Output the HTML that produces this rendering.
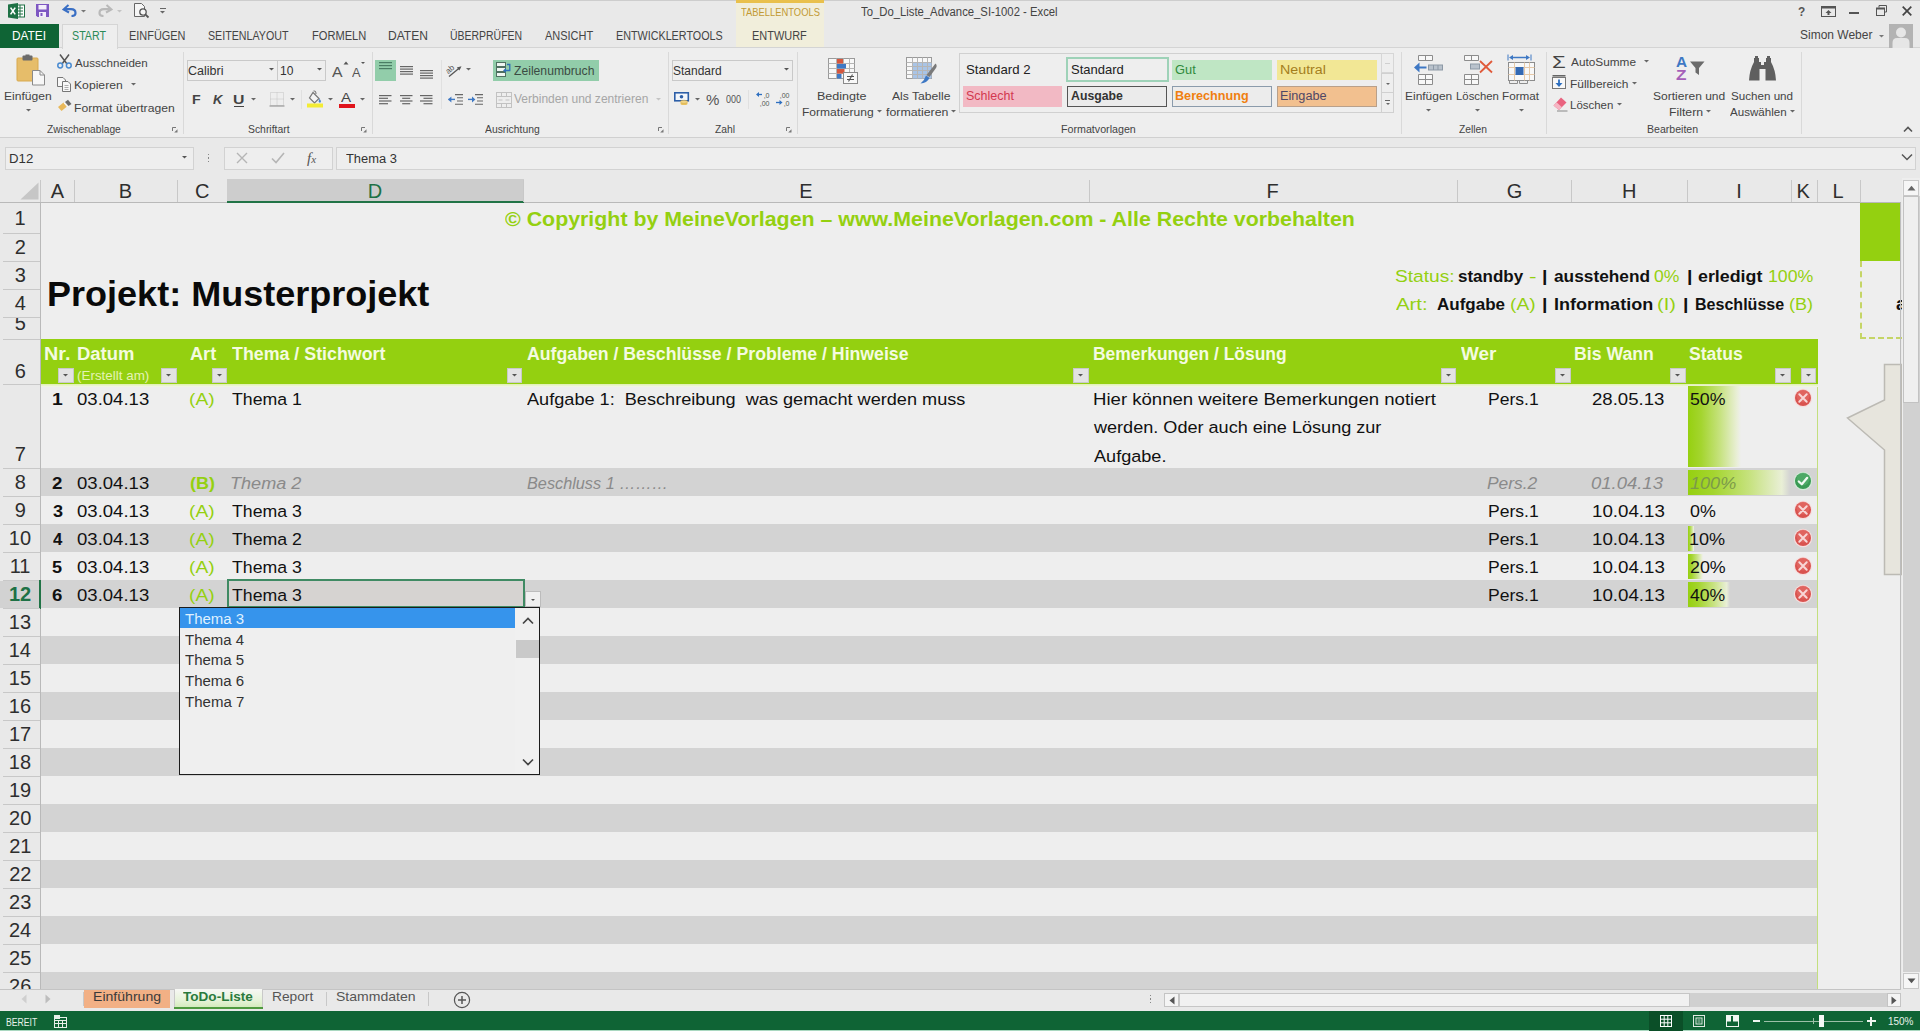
<!DOCTYPE html>
<html lang="de"><head><meta charset="utf-8"><title>To_Do_Liste_Advance_SI-1002 - Excel</title>
<style>
html,body{margin:0;padding:0;}
body{width:1920px;height:1031px;overflow:hidden;background:#e9e9e9;position:relative;font-family:"Liberation Sans",sans-serif;}
.t{position:absolute;white-space:pre;display:block;}
.r{position:absolute;box-sizing:border-box;display:block;}
</style></head><body>
<div class="r" style="left:0.00px;top:0.00px;width:1920.00px;height:1.00px;background:#cdcdcd;"></div>
<div class="r" style="left:736.00px;top:0.00px;width:88.00px;height:47.00px;background:#f1eedb;"></div>
<div class="r" style="left:736.00px;top:0.00px;width:88.00px;height:3.00px;background:#e9c04c;"></div>
<span class="t" style="top:4px;font-size:10.5px;line-height:16px;color:#c29a35;left:741.49px;transform:scaleX(0.8939);transform-origin:0 50%;">TABELLENTOOLS</span>
<span class="t" style="top:3px;font-size:12px;line-height:18px;color:#444;left:861.45px;transform:scaleX(0.9416);transform-origin:0 50%;">To_Do_Liste_Advance_SI-1002 - Excel</span>
<svg class="r" style="left:8.00px;top:3.00px" width="17" height="16" viewBox="0 0 17 16"><rect x="7" y="2" width="9.5" height="12" fill="#fff" stroke="#1e7145" stroke-width="1"/><path d="M9 5h6M9 8h6M9 11h6M12 2v12" stroke="#1e7145" stroke-width="1"/><path d="M0 1.5 L10 0 V16 L0 14.5Z" fill="#1e7145"/><path d="M2.6 4.6 L7.2 11.4 M7.2 4.6 L2.6 11.4" stroke="#fff" stroke-width="1.6"/></svg>
<svg class="r" style="left:36.00px;top:4.00px" width="13" height="13" viewBox="0 0 13 13"><path d="M0 0H13V13H1.5L0 11.5Z" fill="#7e57c2"/><rect x="2.5" y="1" width="8" height="4.5" fill="#f3eefa"/><rect x="3" y="8" width="7" height="5" fill="#f3eefa"/><rect x="4.5" y="9" width="2" height="3" fill="#7e57c2"/></svg>
<svg class="r" style="left:62.00px;top:4.00px" width="16" height="13" viewBox="0 0 16 13"><path d="M6.5 1 L1.5 5.5 L7 8.5" fill="none" stroke="#3a6fc4" stroke-width="2"/><path d="M2.5 5.2 H9 Q13.5 5.2 13.5 9 Q13.5 12 9.5 12" fill="none" stroke="#3a6fc4" stroke-width="2.2"/></svg>
<svg class="r" style="left:80.00px;top:8.75px" width="7.0" height="4.5" viewBox="0 0 7.0 4.5"><path d="M1 1 L6.0 1 L3.5 3.5 Z" fill="#777"/></svg>
<svg class="r" style="left:97.00px;top:4.00px" width="16" height="13" viewBox="0 0 16 13"><path d="M9.5 1 L14.5 5.5 L9 8.5" fill="none" stroke="#b9b9b9" stroke-width="2"/><path d="M13.5 5.2 H7 Q2.5 5.2 2.5 9 Q2.5 12 6.5 12" fill="none" stroke="#b9b9b9" stroke-width="2.2"/></svg>
<svg class="r" style="left:116.00px;top:8.75px" width="7.0" height="4.5" viewBox="0 0 7.0 4.5"><path d="M1 1 L6.0 1 L3.5 3.5 Z" fill="#c4c4c4"/></svg>
<svg class="r" style="left:133.00px;top:2.00px" width="17" height="17" viewBox="0 0 17 17"><path d="M1.5 1.5H8.5L11.5 4.5V14.5H1.5Z" fill="#f6f6f6" stroke="#666" stroke-width="1"/><circle cx="10" cy="10" r="3.2" fill="#f6f6f6" stroke="#555" stroke-width="1.3"/><path d="M12.3 12.3L15.5 15.5" stroke="#555" stroke-width="1.8"/></svg>
<div class="r" style="left:159.50px;top:8.00px;width:6.00px;height:1.00px;background:#666;"></div>
<svg class="r" style="left:159.00px;top:9.75px" width="7.0" height="4.5" viewBox="0 0 7.0 4.5"><path d="M1 1 L6.0 1 L3.5 3.5 Z" fill="#666"/></svg>
<span class="t" style="top:3px;font-size:12.5px;line-height:18px;color:#555;font-weight:700;left:1798.46px;transform:scaleX(0.9461);transform-origin:0 50%;">?</span>
<svg class="r" style="left:1821.00px;top:6.00px" width="15" height="11" viewBox="0 0 15 11"><rect x="0.5" y="0.5" width="14" height="10" fill="none" stroke="#555"/><rect x="0.5" y="0.5" width="14" height="2" fill="#555"/><path d="M7.5 4 L4.5 7 H6.5 V9 H8.5 V7 H10.5Z" fill="#555"/></svg>
<div class="r" style="left:1849.00px;top:12.00px;width:10.00px;height:2.00px;background:#555;"></div>
<svg class="r" style="left:1876.00px;top:5.00px" width="11" height="11" viewBox="0 0 11 11"><path d="M3 2.5V0.5H10.5V7H8.5" fill="none" stroke="#555"/><rect x="0.5" y="3" width="8" height="7.5" fill="none" stroke="#555"/><rect x="0.5" y="3" width="8" height="1.5" fill="#555"/></svg>
<svg class="r" style="left:1902.00px;top:6.00px" width="10" height="10" viewBox="0 0 10 10"><path d="M0.7 0.7L9.3 9.3M9.3 0.7L0.7 9.3" stroke="#444" stroke-width="1.7"/></svg>
<div class="r" style="left:0.00px;top:47.50px;width:1920.00px;height:90.00px;background:#eeeeee;"></div>
<div class="r" style="left:0.00px;top:47.00px;width:1920.00px;height:1.00px;background:#d4d4d4;"></div>
<div class="r" style="left:0.00px;top:24.00px;width:59.00px;height:24.00px;background:#0f6435;"></div>
<span class="t" style="top:27px;font-size:12px;line-height:18px;color:#fff;left:12.33px;transform:scaleX(0.9890);transform-origin:0 50%;">DATEI</span>
<div class="r" style="left:62.00px;top:24.00px;width:56.00px;height:24.50px;background:#eeeeee;border:1px solid #d5d5d5;border-bottom:none;"></div>
<span class="t" style="top:27px;font-size:12px;line-height:18px;color:#2b8a57;left:72.01px;transform:scaleX(0.8902);transform-origin:0 50%;">START</span>
<span class="t" style="top:27px;font-size:12px;line-height:18px;color:#444444;left:129.10px;transform:scaleX(0.9110);transform-origin:0 50%;">EINFÜGEN</span>
<span class="t" style="top:27px;font-size:12px;line-height:18px;color:#444444;left:207.82px;transform:scaleX(0.8891);transform-origin:0 50%;">SEITENLAYOUT</span>
<span class="t" style="top:27px;font-size:12px;line-height:18px;color:#444444;left:311.59px;transform:scaleX(0.9258);transform-origin:0 50%;">FORMELN</span>
<span class="t" style="top:27px;font-size:12px;line-height:18px;color:#444444;left:387.51px;transform:scaleX(1.0048);transform-origin:0 50%;">DATEN</span>
<span class="t" style="top:27px;font-size:12px;line-height:18px;color:#444444;left:449.59px;transform:scaleX(0.8716);transform-origin:0 50%;">ÜBERPRÜFEN</span>
<span class="t" style="top:27px;font-size:12px;line-height:18px;color:#444444;left:544.78px;transform:scaleX(0.9146);transform-origin:0 50%;">ANSICHT</span>
<span class="t" style="top:27px;font-size:12px;line-height:18px;color:#444444;left:615.82px;transform:scaleX(0.8971);transform-origin:0 50%;">ENTWICKLERTOOLS</span>
<span class="t" style="top:27px;font-size:12px;line-height:18px;color:#444444;left:752.40px;transform:scaleX(0.9124);transform-origin:0 50%;">ENTWURF</span>
<span class="t" style="top:26px;font-size:12px;line-height:18px;color:#444444;left:1800.26px;transform:scaleX(0.9995);transform-origin:0 50%;">Simon Weber</span>
<svg class="r" style="left:1877.50px;top:33.75px" width="7.0" height="4.5" viewBox="0 0 7.0 4.5"><path d="M1 1 L6.0 1 L3.5 3.5 Z" fill="#777"/></svg>
<svg class="r" style="left:1889.00px;top:24.00px" width="24" height="24" viewBox="0 0 24 24"><rect width="24" height="24" fill="#b3b3b3"/><circle cx="12" cy="8.5" r="5" fill="#e6e6e6"/><path d="M3.5 24 V19 Q3.5 14 8 14 H16 Q20.5 14 20.5 19 V24Z" fill="#e6e6e6"/></svg>
<div class="r" style="left:0.00px;top:137.00px;width:1920.00px;height:1.00px;background:#d0d0d0;"></div>
<div class="r" style="left:183.00px;top:52.00px;width:1.00px;height:82.00px;background:#d9d9d9;"></div>
<div class="r" style="left:371.50px;top:52.00px;width:1.00px;height:82.00px;background:#d9d9d9;"></div>
<div class="r" style="left:668.00px;top:52.00px;width:1.00px;height:82.00px;background:#d9d9d9;"></div>
<div class="r" style="left:796.50px;top:52.00px;width:1.00px;height:82.00px;background:#d9d9d9;"></div>
<div class="r" style="left:1400.50px;top:52.00px;width:1.00px;height:82.00px;background:#d9d9d9;"></div>
<div class="r" style="left:1545.50px;top:52.00px;width:1.00px;height:82.00px;background:#d9d9d9;"></div>
<div class="r" style="left:1801.00px;top:52.00px;width:1.00px;height:82.00px;background:#d9d9d9;"></div>
<span class="t" style="top:121px;font-size:11.5px;line-height:16px;color:#444;left:46.68px;transform:scaleX(0.8877);transform-origin:0 50%;">Zwischenablage</span>
<span class="t" style="top:121px;font-size:11.5px;line-height:16px;color:#444;left:248.23px;transform:scaleX(0.9030);transform-origin:0 50%;">Schriftart</span>
<span class="t" style="top:121px;font-size:11.5px;line-height:16px;color:#444;left:484.68px;transform:scaleX(0.9005);transform-origin:0 50%;">Ausrichtung</span>
<span class="t" style="top:121px;font-size:11.5px;line-height:16px;color:#444;left:714.67px;transform:scaleX(0.8946);transform-origin:0 50%;">Zahl</span>
<span class="t" style="top:121px;font-size:11.5px;line-height:16px;color:#444;left:1060.72px;transform:scaleX(0.9284);transform-origin:0 50%;">Formatvorlagen</span>
<span class="t" style="top:121px;font-size:11.5px;line-height:16px;color:#444;left:1458.67px;transform:scaleX(0.8937);transform-origin:0 50%;">Zellen</span>
<span class="t" style="top:121px;font-size:11.5px;line-height:16px;color:#444;left:1647.13px;transform:scaleX(0.9177);transform-origin:0 50%;">Bearbeiten</span>
<svg class="r" style="left:172.00px;top:127.00px" width="6" height="6" viewBox="0 0 6 6"><path d="M0.5 4V0.5H4" fill="none" stroke="#777"/><path d="M5.5 2.2V5.5H2.2Z" fill="#777"/></svg>
<svg class="r" style="left:361.00px;top:127.00px" width="6" height="6" viewBox="0 0 6 6"><path d="M0.5 4V0.5H4" fill="none" stroke="#777"/><path d="M5.5 2.2V5.5H2.2Z" fill="#777"/></svg>
<svg class="r" style="left:657.50px;top:127.00px" width="6" height="6" viewBox="0 0 6 6"><path d="M0.5 4V0.5H4" fill="none" stroke="#777"/><path d="M5.5 2.2V5.5H2.2Z" fill="#777"/></svg>
<svg class="r" style="left:786.00px;top:127.00px" width="6" height="6" viewBox="0 0 6 6"><path d="M0.5 4V0.5H4" fill="none" stroke="#777"/><path d="M5.5 2.2V5.5H2.2Z" fill="#777"/></svg>
<svg class="r" style="left:16.00px;top:54.00px" width="30" height="32" viewBox="0 0 30 32"><rect x="1" y="4" width="21" height="23" rx="1" fill="#e6bd6a"/><rect x="1" y="4" width="21" height="23" rx="1" fill="none" stroke="#d8a94e" stroke-width="1"/><rect x="6.5" y="1.5" width="10" height="5" rx="1" fill="#6b6b6b"/><rect x="9.5" y="0.5" width="4" height="2.5" fill="#6b6b6b"/><path d="M16.5 16.5H24L28.5 21V31H16.5Z" fill="#f7f7f7" stroke="#8a8a8a" stroke-width="1"/><path d="M24 16.5V21H28.5" fill="none" stroke="#8a8a8a" stroke-width="1"/></svg>
<span class="t" style="top:87px;font-size:11.7px;line-height:17px;color:#444444;left:4.01px;transform:scaleX(1.0344);transform-origin:0 50%;">Einfügen</span>
<svg class="r" style="left:24.50px;top:108.25px" width="7.0" height="4.5" viewBox="0 0 7.0 4.5"><path d="M1 1 L6.0 1 L3.5 3.5 Z" fill="#666"/></svg>
<svg class="r" style="left:57.00px;top:54.00px" width="15" height="15" viewBox="0 0 15 15"><path d="M3 0.5L10 10M12 0.5L5 10" stroke="#555" stroke-width="1.5" fill="none"/><circle cx="3.2" cy="11.5" r="2.4" fill="none" stroke="#4a8bd0" stroke-width="1.5"/><circle cx="11.8" cy="11.5" r="2.4" fill="none" stroke="#4a8bd0" stroke-width="1.5"/></svg>
<span class="t" style="top:54px;font-size:11.7px;line-height:17px;color:#444444;left:74.98px;transform:scaleX(0.9901);transform-origin:0 50%;">Ausschneiden</span>
<svg class="r" style="left:57.00px;top:77.00px" width="15" height="15" viewBox="0 0 15 15"><path d="M0.5 0.5H6L8.5 3V9.5H0.5Z" fill="#f7f7f7" stroke="#777"/><path d="M5.5 4.5H11L13.5 7V14.5H5.5Z" fill="#f7f7f7" stroke="#777"/><path d="M7.5 8.5H11.5M7.5 10.5H11.5M7.5 12.5H11.5" stroke="#999" stroke-width="0.8"/></svg>
<span class="t" style="top:76px;font-size:11.7px;line-height:17px;color:#444444;left:74.00px;transform:scaleX(1.0417);transform-origin:0 50%;">Kopieren</span>
<svg class="r" style="left:129.50px;top:82.25px" width="7.0" height="4.5" viewBox="0 0 7.0 4.5"><path d="M1 1 L6.0 1 L3.5 3.5 Z" fill="#666"/></svg>
<svg class="r" style="left:57.00px;top:99.00px" width="16" height="15" viewBox="0 0 16 15"><path d="M1 8L6.5 3.5L10 7.5L4.5 12Z" fill="#e8b85a"/><path d="M8 3L11 0.8L14.5 5L11.5 7Z" fill="#6b6b6b"/><path d="M7 4L10.5 8" stroke="#fff" stroke-width="0.8"/></svg>
<span class="t" style="top:99px;font-size:11.7px;line-height:17px;color:#444444;left:74.00px;transform:scaleX(1.0401);transform-origin:0 50%;">Format übertragen</span>
<div class="r" style="left:186.50px;top:59.50px;width:91.50px;height:21.50px;background:#eeeeee;border:1px solid #c9c9c9;"></div>
<div class="r" style="left:277.00px;top:59.50px;width:49.00px;height:21.50px;background:#eeeeee;border:1px solid #c9c9c9;"></div>
<span class="t" style="top:62px;font-size:12.5px;line-height:18px;color:#333;left:188.36px;transform:scaleX(1.0015);transform-origin:0 50%;">Calibri</span>
<span class="t" style="top:62px;font-size:12.5px;line-height:18px;color:#333;left:280.08px;transform:scaleX(0.9628);transform-origin:0 50%;">10</span>
<svg class="r" style="left:267.50px;top:67.25px" width="7.0" height="4.5" viewBox="0 0 7.0 4.5"><path d="M1 1 L6.0 1 L3.5 3.5 Z" fill="#555"/></svg>
<svg class="r" style="left:315.50px;top:67.25px" width="7.0" height="4.5" viewBox="0 0 7.0 4.5"><path d="M1 1 L6.0 1 L3.5 3.5 Z" fill="#555"/></svg>
<span class="t" style="top:61px;font-size:15px;line-height:21px;color:#555;left:332.47px;transform:scaleX(1.0556);transform-origin:0 50%;">A</span>
<svg class="r" style="left:343.00px;top:60.50px" width="6" height="4" viewBox="0 0 6 4"><path d="M0.5 3.5L3 0.5L5.5 3.5Z" fill="#555"/></svg>
<span class="t" style="top:63px;font-size:13px;line-height:19px;color:#555;left:352.47px;transform:scaleX(0.9860);transform-origin:0 50%;">A</span>
<svg class="r" style="left:360.00px;top:61.00px" width="6" height="4" viewBox="0 0 6 4"><path d="M1 1 L5 1 L3 3 Z" fill="#555"/></svg>
<span class="t" style="top:90px;font-size:13.5px;line-height:19px;color:#444;font-weight:700;left:192.35px;transform:scaleX(1.0512);transform-origin:0 50%;">F</span>
<span class="t" style="top:90px;font-size:13.5px;line-height:19px;color:#444;font-weight:700;font-style:italic;left:212.77px;transform:scaleX(0.9681);transform-origin:0 50%;">K</span>
<span class="t" style="top:90px;font-size:13.5px;line-height:19px;color:#444;font-weight:700;left:233.05px;transform:scaleX(1.1707);transform-origin:0 50%;">U</span>
<div class="r" style="left:233.50px;top:105.50px;width:10.50px;height:1.00px;background:#444;"></div>
<svg class="r" style="left:250.00px;top:96.75px" width="7.0" height="4.5" viewBox="0 0 7.0 4.5"><path d="M1 1 L6.0 1 L3.5 3.5 Z" fill="#666"/></svg>
<svg class="r" style="left:269.00px;top:91.00px" width="16" height="16" viewBox="0 0 16 16"><rect x="1.5" y="1.5" width="13" height="13" fill="none" stroke="#c4c4c4" stroke-dasharray="1 1"/><path d="M8 1.5V14.5M1.5 8H14.5" stroke="#c4c4c4" stroke-dasharray="1 1"/><path d="M0.5 15H15.5" stroke="#999" stroke-width="1.2"/></svg>
<svg class="r" style="left:289.00px;top:96.75px" width="7.0" height="4.5" viewBox="0 0 7.0 4.5"><path d="M1 1 L6.0 1 L3.5 3.5 Z" fill="#666"/></svg>
<div class="r" style="left:301.00px;top:90.00px;width:1.00px;height:19.00px;background:#e0e0e0;"></div>
<svg class="r" style="left:306.00px;top:90.00px" width="18" height="18" viewBox="0 0 18 18"><path d="M7 2.5 L13 8.5 L8.5 13 L3.5 8 Z" fill="#f4f4f4" stroke="#777" stroke-width="1.2"/><path d="M7.5 1 Q10 0.5 10 4" fill="none" stroke="#777" stroke-width="1.1"/><path d="M13.5 8.5 Q15.8 11.5 14.4 12.6 Q13 13.2 12.6 11.6Z" fill="#4a8bd0"/><rect x="1" y="13.5" width="16" height="4" fill="#f3ec35"/></svg>
<svg class="r" style="left:327.00px;top:96.75px" width="7.0" height="4.5" viewBox="0 0 7.0 4.5"><path d="M1 1 L6.0 1 L3.5 3.5 Z" fill="#666"/></svg>
<span class="t" style="top:89px;font-size:12.5px;line-height:18px;color:#444;left:341.47px;transform:scaleX(1.2064);transform-origin:0 50%;">A</span>
<div class="r" style="left:339.00px;top:103.50px;width:15.50px;height:4.00px;background:#e0141c;"></div>
<svg class="r" style="left:358.50px;top:96.75px" width="7.0" height="4.5" viewBox="0 0 7.0 4.5"><path d="M1 1 L6.0 1 L3.5 3.5 Z" fill="#666"/></svg>
<div class="r" style="left:374.50px;top:59.50px;width:21.00px;height:21.50px;background:#92cdaa;"></div>
<svg class="r" style="left:378.50px;top:62.00px" width="16" height="10" viewBox="0 0 16 10"><rect x="0" y="0" width="13" height="1.2" fill="#4b7d64"/><rect x="0" y="3" width="13" height="1.2" fill="#4b7d64"/><rect x="0" y="6" width="13" height="1.2" fill="#4b7d64"/></svg>
<svg class="r" style="left:399.50px;top:65.50px" width="16" height="11.0" viewBox="0 0 16 11.0"><rect x="0" y="0.0" width="13" height="1.2" fill="#666"/><rect x="0" y="2.5" width="13" height="1.2" fill="#666"/><rect x="0" y="5.0" width="13" height="1.2" fill="#666"/><rect x="0" y="7.5" width="13" height="1.2" fill="#666"/></svg>
<svg class="r" style="left:419.50px;top:69.50px" width="16" height="11.0" viewBox="0 0 16 11.0"><rect x="0" y="0.0" width="13" height="1.2" fill="#666"/><rect x="0" y="2.5" width="13" height="1.2" fill="#666"/><rect x="0" y="5.0" width="13" height="1.2" fill="#666"/><rect x="0" y="7.5" width="13" height="1.2" fill="#666"/></svg>
<svg class="r" style="left:379.00px;top:95.00px" width="16" height="11.8" viewBox="0 0 16 11.8"><rect x="0" y="0.0" width="12.5" height="1.2" fill="#666"/><rect x="0" y="2.7" width="9" height="1.2" fill="#666"/><rect x="0" y="5.4" width="12.5" height="1.2" fill="#666"/><rect x="0" y="8.100000000000001" width="9" height="1.2" fill="#666"/></svg>
<svg class="r" style="left:400.00px;top:95.00px" width="16" height="11.8" viewBox="0 0 16 11.8"><rect x="0" y="0.0" width="12.5" height="1.2" fill="#666"/><rect x="2.2" y="2.7" width="8" height="1.2" fill="#666"/><rect x="0" y="5.4" width="12.5" height="1.2" fill="#666"/><rect x="2.2" y="8.100000000000001" width="8" height="1.2" fill="#666"/></svg>
<svg class="r" style="left:420.00px;top:95.00px" width="16" height="11.8" viewBox="0 0 16 11.8"><rect x="0" y="0.0" width="12.5" height="1.2" fill="#666"/><rect x="3.5" y="2.7" width="9" height="1.2" fill="#666"/><rect x="0" y="5.4" width="12.5" height="1.2" fill="#666"/><rect x="3.5" y="8.100000000000001" width="9" height="1.2" fill="#666"/></svg>
<div class="r" style="left:441.00px;top:60.00px;width:1.00px;height:49.00px;background:#e0e0e0;"></div>
<svg class="r" style="left:446.00px;top:61.00px" width="17" height="17" viewBox="0 0 17 17"><text x="1" y="10" font-family="Liberation Sans, sans-serif" font-size="8" fill="#555" transform="rotate(-40 6 10)">ab</text><path d="M3 15.5L14 6.5" stroke="#555" stroke-width="1.3"/><path d="M15.5 5.3L10.8 6.4L13.4 9.6Z" fill="#555"/></svg>
<svg class="r" style="left:465.00px;top:67.25px" width="7.0" height="4.5" viewBox="0 0 7.0 4.5"><path d="M1 1 L6.0 1 L3.5 3.5 Z" fill="#666"/></svg>
<svg class="r" style="left:447.50px;top:94.00px" width="16" height="11" viewBox="0 0 16 11"><path d="M7 0.6H15M9 3.8H15M9 7H15M7 10.2H15" stroke="#666" stroke-width="1.1"/><path d="M0.5 5.4H7" stroke="#3e78c4" stroke-width="1.4"/><path d="M0 5.4L3.4 2.4V8.4Z" fill="#3e78c4"/></svg>
<svg class="r" style="left:467.50px;top:94.00px" width="16" height="11" viewBox="0 0 16 11"><path d="M7 0.6H15M9 3.8H15M9 7H15M7 10.2H15" stroke="#666" stroke-width="1.1"/><path d="M0 5.4H6" stroke="#3e78c4" stroke-width="1.4"/><path d="M7.4 5.4L4 2.4V8.4Z" fill="#3e78c4"/></svg>
<div class="r" style="left:493.30px;top:59.50px;width:105.50px;height:21.50px;background:#92cdaa;"></div>
<svg class="r" style="left:496.00px;top:62.00px" width="15" height="16" viewBox="0 0 15 16"><rect x="0.5" y="0.5" width="9" height="4" fill="#eef6f1" stroke="#4f6f60"/><rect x="0.5" y="5.5" width="9" height="4" fill="#eef6f1" stroke="#4f6f60"/><rect x="0.5" y="10.5" width="9" height="4" fill="#eef6f1" stroke="#4f6f60"/><path d="M11 2.5H13.8V8.5H8.5" fill="none" stroke="#2f6fb5" stroke-width="1.3"/><path d="M7 8.5L10 6V11Z" fill="#2f6fb5"/></svg>
<span class="t" style="top:62px;font-size:12px;line-height:18px;color:#3b4b43;left:513.61px;transform:scaleX(1.0139);transform-origin:0 50%;">Zeilenumbruch</span>
<svg class="r" style="left:496.00px;top:91.50px" width="16" height="16" viewBox="0 0 16 16"><rect x="0.5" y="0.5" width="15" height="15" fill="none" stroke="#c2c2c2"/><path d="M0.5 4.5H15.5M0.5 11.5H15.5M5.5 0.5V4.5M10.5 0.5V4.5M5.5 11.5V15.5M10.5 11.5V15.5" stroke="#c2c2c2"/><path d="M2.5 8H6.5M9.5 8H13.5" stroke="#c2c2c2" stroke-width="1.2"/></svg>
<span class="t" style="top:90px;font-size:12px;line-height:18px;color:#a6a6a6;left:513.95px;transform:scaleX(1.0017);transform-origin:0 50%;">Verbinden und zentrieren</span>
<svg class="r" style="left:655.00px;top:96.75px" width="7.0" height="4.5" viewBox="0 0 7.0 4.5"><path d="M1 1 L6.0 1 L3.5 3.5 Z" fill="#c4c4c4"/></svg>
<div class="r" style="left:671.50px;top:59.50px;width:121.50px;height:21.50px;background:#eeeeee;border:1px solid #c9c9c9;"></div>
<span class="t" style="top:62px;font-size:12.5px;line-height:18px;color:#333;left:673.46px;transform:scaleX(0.9582);transform-origin:0 50%;">Standard</span>
<svg class="r" style="left:783.00px;top:67.25px" width="7.0" height="4.5" viewBox="0 0 7.0 4.5"><path d="M1 1 L6.0 1 L3.5 3.5 Z" fill="#555"/></svg>
<svg class="r" style="left:674.00px;top:92.00px" width="16" height="15" viewBox="0 0 16 15"><rect x="0.8" y="0.8" width="13.5" height="8" fill="#f2f6fb" stroke="#2d5fa8" stroke-width="1.6"/><circle cx="7.5" cy="4.8" r="1.8" fill="#2d5fa8"/><ellipse cx="10" cy="11.5" rx="3.6" ry="1.6" fill="#e9c25e"/><ellipse cx="10" cy="9.8" rx="3.6" ry="1.6" fill="#f0d488" stroke="#d1a640" stroke-width="0.5"/></svg>
<svg class="r" style="left:694.00px;top:96.75px" width="7.0" height="4.5" viewBox="0 0 7.0 4.5"><path d="M1 1 L6.0 1 L3.5 3.5 Z" fill="#666"/></svg>
<span class="t" style="top:89px;font-size:15px;line-height:21px;color:#555;left:706.16px;transform:scaleX(1.0026);transform-origin:0 50%;">%</span>
<span class="t" style="top:92px;font-size:10px;line-height:15px;color:#555;left:726.35px;transform:scaleX(0.8992);transform-origin:0 50%;">000</span>
<div class="r" style="left:748.00px;top:90.00px;width:1.00px;height:19.00px;background:#e0e0e0;"></div>
<svg class="r" style="left:755.50px;top:91.00px" width="14" height="16" viewBox="0 0 14 16"><path d="M1 3.5H6" stroke="#2d6fc0" stroke-width="1.3"/><path d="M0 3.5L3 1V6Z" fill="#2d6fc0"/><text x="13.5" y="6.5" text-anchor="end" font-family="Liberation Sans, sans-serif" font-size="7" fill="#555">,0</text><text x="13.5" y="14.5" text-anchor="end" font-family="Liberation Sans, sans-serif" font-size="7" fill="#555">,00</text></svg>
<svg class="r" style="left:776.00px;top:91.00px" width="14" height="16" viewBox="0 0 14 16"><path d="M0 11.5H5" stroke="#2d6fc0" stroke-width="1.3"/><path d="M6.5 11.5L3.5 9V14Z" fill="#2d6fc0"/><text x="13.5" y="6.5" text-anchor="end" font-family="Liberation Sans, sans-serif" font-size="7" fill="#555">,00</text><text x="13.5" y="14.5" text-anchor="end" font-family="Liberation Sans, sans-serif" font-size="7" fill="#555">,0</text></svg>
<svg class="r" style="left:828.00px;top:57.00px" width="31" height="28" viewBox="0 0 31 28"><rect x="0.5" y="1.5" width="26" height="20" fill="#f8f8f8" stroke="#9a9a9a"/><path d="M0.5 6.5H26.5M0.5 11.5H26.5M0.5 16.5H26.5M8.5 1.5V21.5M15.5 1.5V21.5M21.5 1.5V21.5" stroke="#b5b5b5" stroke-width="1"/><rect x="9" y="2" width="6" height="4.5" fill="#d4573f"/><rect x="9" y="7" width="9" height="4.5" fill="#3e78c4"/><rect x="9" y="12" width="7.5" height="4.5" fill="#d4573f"/><rect x="9" y="17" width="4.5" height="4.5" fill="#3e78c4"/><rect x="15.5" y="15.5" width="14" height="11" fill="#f8f8f8" stroke="#8a8a8a"/><path d="M19 19.5H26M19 22.5H26M24.5 17.5L20.5 24.5" stroke="#555" stroke-width="1.1"/></svg>
<span class="t" style="top:87px;font-size:11.7px;line-height:17px;color:#444444;left:816.97px;transform:scaleX(1.0736);transform-origin:0 50%;">Bedingte</span>
<span class="t" style="top:103px;font-size:11.7px;line-height:17px;color:#444444;left:801.51px;transform:scaleX(1.0314);transform-origin:0 50%;">Formatierung</span>
<svg class="r" style="left:875.50px;top:108.75px" width="7.0" height="4.5" viewBox="0 0 7.0 4.5"><path d="M1 1 L6.0 1 L3.5 3.5 Z" fill="#666"/></svg>
<svg class="r" style="left:906.00px;top:56.00px" width="32" height="29" viewBox="0 0 32 29"><rect x="0.5" y="1.5" width="25" height="21" fill="#f8f8f8" stroke="#9a9a9a"/><rect x="7" y="7" width="18.5" height="15.5" fill="#a9c4e6"/><path d="M0.5 6.5H25.5M0.5 10.5H25.5M0.5 14.5H25.5M0.5 18.5H25.5M6.5 1.5V22.5M11.5 1.5V22.5M16.5 1.5V22.5M21.5 1.5V22.5" stroke="#b5b5b5" stroke-width="1"/><path d="M29.5 7.5Q31.5 9.5 30 12L23.5 21L20.5 19Z" fill="#7a7a7a"/><path d="M20 19.5L23.5 22Q21 27 14.5 27.5Q18.5 24.5 20 19.5Z" fill="#3e78c4"/></svg>
<span class="t" style="top:87px;font-size:11.7px;line-height:17px;color:#444444;left:891.98px;transform:scaleX(1.0389);transform-origin:0 50%;">Als Tabelle</span>
<span class="t" style="top:103px;font-size:11.7px;line-height:17px;color:#444444;left:885.83px;transform:scaleX(1.0558);transform-origin:0 50%;">formatieren</span>
<svg class="r" style="left:950.00px;top:108.75px" width="7.0" height="4.5" viewBox="0 0 7.0 4.5"><path d="M1 1 L6.0 1 L3.5 3.5 Z" fill="#666"/></svg>
<div class="r" style="left:959.00px;top:53.00px;width:435.00px;height:59.50px;background:#eeeeee;border:1px solid #d0d0d0;"></div>
<span class="t" style="top:60px;font-size:13.2px;line-height:19px;color:#222;left:966.10px;transform:scaleX(0.9997);transform-origin:0 50%;">Standard 2</span>
<div class="r" style="left:962.50px;top:85.50px;width:99.50px;height:21.00px;background:#f2b9c4;"></div>
<span class="t" style="top:87px;font-size:12.5px;line-height:18px;color:#d2384f;left:966.13px;transform:scaleX(1.0003);transform-origin:0 50%;">Schlecht</span>
<div class="r" style="left:1065.50px;top:57.00px;width:103.00px;height:24.50px;background:#eeeeee;border:2px solid #9ed2b8;"></div>
<span class="t" style="top:60px;font-size:13.2px;line-height:19px;color:#222;left:1071.01px;transform:scaleX(0.9861);transform-origin:0 50%;">Standard</span>
<div class="r" style="left:1067.00px;top:85.50px;width:100.00px;height:21.00px;background:#ebebeb;border:1px solid #555;"></div>
<span class="t" style="top:87px;font-size:12.5px;line-height:18px;color:#333;font-weight:700;left:1071.29px;transform:scaleX(0.9836);transform-origin:0 50%;">Ausgabe</span>
<div class="r" style="left:1172.00px;top:59.50px;width:100.00px;height:20.50px;background:#bfe6c4;"></div>
<span class="t" style="top:61px;font-size:12.5px;line-height:18px;color:#2f8a3c;left:1175.35px;transform:scaleX(1.0295);transform-origin:0 50%;">Gut</span>
<div class="r" style="left:1172.00px;top:85.50px;width:100.00px;height:21.00px;background:#ececec;border:1px solid #8b9bab;"></div>
<span class="t" style="top:87px;font-size:12.5px;line-height:18px;color:#f07f10;font-weight:700;left:1175.16px;transform:scaleX(1.0105);transform-origin:0 50%;">Berechnung</span>
<div class="r" style="left:1277.00px;top:59.50px;width:100.00px;height:20.50px;background:#f2e795;"></div>
<span class="t" style="top:61px;font-size:12.5px;line-height:18px;color:#a47e1d;left:1279.83px;transform:scaleX(1.1396);transform-origin:0 50%;">Neutral</span>
<div class="r" style="left:1277.00px;top:85.50px;width:100.00px;height:21.00px;background:#f2c08f;border:1px solid #b9a08a;"></div>
<span class="t" style="top:87px;font-size:12.5px;line-height:18px;color:#4f4766;left:1279.96px;transform:scaleX(1.0159);transform-origin:0 50%;">Eingabe</span>
<div class="r" style="left:1381.00px;top:53.00px;width:13.00px;height:20.00px;background:#eeeeee;border:1px solid #d6d6d6;"></div>
<div class="r" style="left:1381.00px;top:72.50px;width:13.00px;height:20.00px;background:#eeeeee;border:1px solid #d0d0d0;"></div>
<div class="r" style="left:1381.00px;top:92.00px;width:13.00px;height:20.50px;background:#eeeeee;border:1px solid #d0d0d0;"></div>
<div class="r" style="left:1385.00px;top:62.50px;width:5.00px;height:1.00px;background:#cfcfcf;"></div>
<svg class="r" style="left:1384.50px;top:81.50px" width="6" height="4" viewBox="0 0 6 4"><path d="M1 1 L5 1 L3 3 Z" fill="#666"/></svg>
<div class="r" style="left:1385.00px;top:99.50px;width:5.00px;height:1.00px;background:#666;"></div>
<svg class="r" style="left:1384.50px;top:101.50px" width="6" height="4" viewBox="0 0 6 4"><path d="M1 1 L5 1 L3 3 Z" fill="#666"/></svg>
<svg class="r" style="left:1414.00px;top:55.00px" width="30" height="30" viewBox="0 0 30 30"><path d="M4.5 0.5H18.5V5.5H4.5ZM11.5 0.5V5.5" fill="#f8f8f8" stroke="#8c8c8c"/><path d="M4.5 19.5H18.5V29.5H4.5ZM11.5 19.5V29.5M4.5 24.5H18.5" fill="#f8f8f8" stroke="#8c8c8c"/><rect x="14.5" y="10" width="14" height="5" fill="#b9c2cc" stroke="#8d99a6"/><path d="M19.5 10V15M24 10V15" stroke="#8d99a6"/><path d="M2 12.5H12.5" stroke="#3e78c4" stroke-width="2"/><path d="M0 12.5L5.5 7.5V17.5Z" fill="#3e78c4"/></svg>
<span class="t" style="top:87px;font-size:11.7px;line-height:17px;color:#444444;left:1404.82px;transform:scaleX(1.0231);transform-origin:0 50%;">Einfügen</span>
<svg class="r" style="left:1425.20px;top:108.25px" width="7.0" height="4.5" viewBox="0 0 7.0 4.5"><path d="M1 1 L6.0 1 L3.5 3.5 Z" fill="#666"/></svg>
<svg class="r" style="left:1464.00px;top:55.00px" width="30" height="30" viewBox="0 0 30 30"><path d="M0.5 0.5H14.5V5.5H0.5ZM7.5 0.5V5.5" fill="#f8f8f8" stroke="#8c8c8c"/><path d="M0.5 19.5H14.5V29.5H0.5ZM7.5 19.5V29.5M0.5 24.5H14.5" fill="#f8f8f8" stroke="#8c8c8c"/><rect x="6.5" y="9" width="9" height="5" fill="#b9c2cc" stroke="#8d99a6"/><path d="M16 6L28 17.5M28 6L16 17.5" stroke="#e05a3a" stroke-width="1.8"/></svg>
<span class="t" style="top:87px;font-size:11.7px;line-height:17px;color:#444444;left:1455.77px;transform:scaleX(0.9714);transform-origin:0 50%;">Löschen</span>
<svg class="r" style="left:1474.00px;top:108.25px" width="7.0" height="4.5" viewBox="0 0 7.0 4.5"><path d="M1 1 L6.0 1 L3.5 3.5 Z" fill="#666"/></svg>
<svg class="r" style="left:1507.00px;top:54.00px" width="29" height="31" viewBox="0 0 29 31"><path d="M4 3.5H21" stroke="#3e78c4" stroke-width="1.5"/><path d="M2 3.5L6 1V6ZM23 3.5L19 1V6Z" fill="#3e78c4"/><path d="M1 0.5V6.5M24 0.5V6.5" stroke="#3e78c4"/><rect x="1.5" y="8.5" width="26" height="18" fill="#f8f8f8" stroke="#8c8c8c"/><path d="M1.5 13.5H27.5M1.5 20.5H27.5M7.5 8.5V26.5M17.5 8.5V26.5M22.5 8.5V26.5" stroke="#e6c9a8"/><rect x="8.5" y="13" width="8" height="8" fill="#3469b3"/><path d="M2.5 27V29.5H10.5V27M12.5 27V29.5H20.5V27" fill="none" stroke="#8c8c8c"/></svg>
<span class="t" style="top:87px;font-size:11.7px;line-height:17px;color:#444444;left:1502.04px;transform:scaleX(0.9997);transform-origin:0 50%;">Format</span>
<svg class="r" style="left:1518.20px;top:108.25px" width="7.0" height="4.5" viewBox="0 0 7.0 4.5"><path d="M1 1 L6.0 1 L3.5 3.5 Z" fill="#666"/></svg>
<span class="t" style="top:52px;font-size:16px;line-height:21px;color:#444;left:1552.13px;transform:scaleX(1.3904);transform-origin:0 50%;">Σ</span>
<span class="t" style="top:53px;font-size:11.7px;line-height:17px;color:#444444;left:1570.78px;transform:scaleX(1.0104);transform-origin:0 50%;">AutoSumme</span>
<svg class="r" style="left:1642.50px;top:59.25px" width="7.0" height="4.5" viewBox="0 0 7.0 4.5"><path d="M1 1 L6.0 1 L3.5 3.5 Z" fill="#666"/></svg>
<svg class="r" style="left:1552.00px;top:75.00px" width="15" height="15" viewBox="0 0 15 15"><rect x="0.5" y="2.5" width="13" height="11" fill="#f8f8f8" stroke="#777"/><path d="M0.5 0.8H13.5" stroke="#555" stroke-width="1.4"/><path d="M7 4.5V9" stroke="#2d6fc0" stroke-width="1.8"/><path d="M7 12L3.5 8H10.5Z" fill="#2d6fc0"/></svg>
<span class="t" style="top:75px;font-size:11.7px;line-height:17px;color:#444444;left:1569.82px;transform:scaleX(1.0215);transform-origin:0 50%;">Füllbereich</span>
<svg class="r" style="left:1630.50px;top:81.25px" width="7.0" height="4.5" viewBox="0 0 7.0 4.5"><path d="M1 1 L6.0 1 L3.5 3.5 Z" fill="#666"/></svg>
<svg class="r" style="left:1552.00px;top:96.00px" width="17" height="16" viewBox="0 0 17 16"><path d="M1.5 9.5L9 1.5L14.5 6.5L7 14Z" fill="#e9637f"/><path d="M1.5 9.5L4.5 6.3L10 11.3L7 14Z" fill="#f5b5c3"/><path d="M5 15H15.5" stroke="#888" stroke-width="1"/></svg>
<span class="t" style="top:96px;font-size:11.7px;line-height:17px;color:#444444;left:1569.86px;transform:scaleX(0.9808);transform-origin:0 50%;">Löschen</span>
<svg class="r" style="left:1615.50px;top:102.25px" width="7.0" height="4.5" viewBox="0 0 7.0 4.5"><path d="M1 1 L6.0 1 L3.5 3.5 Z" fill="#666"/></svg>
<span class="t" style="top:52px;font-size:14.5px;line-height:20px;color:#3e78c4;font-weight:700;left:1676.32px;transform:scaleX(1.0588);transform-origin:0 50%;">A</span>
<span class="t" style="top:65px;font-size:14.5px;line-height:20px;color:#a55fb8;font-weight:700;left:1676.49px;transform:scaleX(1.1863);transform-origin:0 50%;">Z</span>
<svg class="r" style="left:1690.00px;top:61.00px" width="15" height="15" viewBox="0 0 15 15"><path d="M0 0.5H14.5L9 7V14L5.5 11.5V7Z" fill="#6b6b6b"/></svg>
<span class="t" style="top:87px;font-size:11.7px;line-height:17px;color:#444444;left:1653.45px;transform:scaleX(1.0295);transform-origin:0 50%;">Sortieren und</span>
<span class="t" style="top:103px;font-size:11.7px;line-height:17px;color:#444444;left:1668.69px;transform:scaleX(1.0491);transform-origin:0 50%;">Filtern</span>
<svg class="r" style="left:1705.00px;top:108.75px" width="7.0" height="4.5" viewBox="0 0 7.0 4.5"><path d="M1 1 L6.0 1 L3.5 3.5 Z" fill="#666"/></svg>
<svg class="r" style="left:1748.00px;top:56.00px" width="29" height="26" viewBox="0 0 29 26"><path d="M6 2H11V6H13V9H16V6H18V2H23V6Q27.5 14 28 24.5H17.5V13H11.5V24.5H1Q1.5 14 6 6Z" fill="#5f5f5f"/><rect x="7" y="0" width="3" height="3" fill="#5f5f5f"/><rect x="19" y="0" width="3" height="3" fill="#5f5f5f"/></svg>
<span class="t" style="top:87px;font-size:11.7px;line-height:17px;color:#444444;left:1731.17px;transform:scaleX(0.9940);transform-origin:0 50%;">Suchen und</span>
<span class="t" style="top:103px;font-size:11.7px;line-height:17px;color:#444444;left:1729.98px;transform:scaleX(0.9919);transform-origin:0 50%;">Auswählen</span>
<svg class="r" style="left:1789.00px;top:108.75px" width="7.0" height="4.5" viewBox="0 0 7.0 4.5"><path d="M1 1 L6.0 1 L3.5 3.5 Z" fill="#666"/></svg>
<svg class="r" style="left:1903.00px;top:126.00px" width="10" height="7" viewBox="0 0 10 7"><path d="M1 5.5L5 1.5L9 5.5" fill="none" stroke="#555" stroke-width="1.6"/></svg>
<div class="r" style="left:4.50px;top:146.50px;width:189.00px;height:23.00px;background:#eeeeee;border:1px solid #d2d2d2;"></div>
<span class="t" style="top:150px;font-size:12.5px;line-height:18px;color:#333;left:8.92px;transform:scaleX(1.0575);transform-origin:0 50%;">D12</span>
<svg class="r" style="left:180.50px;top:154.75px" width="7.0" height="4.5" viewBox="0 0 7.0 4.5"><path d="M1 1 L6.0 1 L3.5 3.5 Z" fill="#555"/></svg>
<div class="r" style="left:207.50px;top:153.50px;width:1.50px;height:1.50px;background:#888;"></div>
<div class="r" style="left:207.50px;top:157.00px;width:1.50px;height:1.50px;background:#888;"></div>
<div class="r" style="left:207.50px;top:160.50px;width:1.50px;height:1.50px;background:#888;"></div>
<div class="r" style="left:223.50px;top:146.50px;width:109.50px;height:23.00px;background:#eeeeee;border:1px solid #d2d2d2;"></div>
<svg class="r" style="left:236.00px;top:151.50px" width="12" height="12" viewBox="0 0 12 12"><path d="M1 1L11 11M11 1L1 11" stroke="#b5b5b5" stroke-width="1.4"/></svg>
<svg class="r" style="left:271.00px;top:151.50px" width="14" height="12" viewBox="0 0 14 12"><path d="M1 6.5L5 10.5L13 1" fill="none" stroke="#b5b5b5" stroke-width="1.6"/></svg>
<span class="t" style="left:307px;top:149px;font-family:'Liberation Serif',serif;font-style:italic;font-size:15px;line-height:18px;color:#555">f<span style="font-size:11px">x</span></span>
<div class="r" style="left:336.00px;top:146.50px;width:1580.00px;height:23.00px;background:#eeeeee;border:1px solid #d2d2d2;"></div>
<span class="t" style="top:150px;font-size:12.5px;line-height:18px;color:#333;left:345.71px;transform:scaleX(1.0309);transform-origin:0 50%;">Thema 3</span>
<svg class="r" style="left:1901.00px;top:153.00px" width="12" height="8" viewBox="0 0 12 8"><path d="M1 1.5L6 6.5L11 1.5" fill="none" stroke="#555" stroke-width="1.5"/></svg>
<div class="r" style="left:41.00px;top:202.50px;width:1860.00px;height:786.50px;background:#eeeeee;"></div>
<div class="r" style="left:0.00px;top:178.00px;width:1901.00px;height:24.50px;background:#e9e9e9;"></div>
<div class="r" style="left:0.00px;top:202.00px;width:1901.00px;height:1.00px;background:#b9b9b9;"></div>
<svg class="r" style="left:20.00px;top:182.00px" width="19" height="18" viewBox="0 0 19 18"><path d="M18.5 0.5V17.5H0.5Z" fill="#c6c6c6"/></svg>
<span class="t" style="top:178px;font-size:20px;line-height:26px;color:#2e2e2e;left:50.83px;">A</span>
<div class="r" style="left:73.50px;top:180.00px;width:1.00px;height:22.00px;background:#c8c8c8;"></div>
<span class="t" style="top:178px;font-size:20px;line-height:26px;color:#2e2e2e;left:118.79px;">B</span>
<div class="r" style="left:177.00px;top:180.00px;width:1.00px;height:22.00px;background:#c8c8c8;"></div>
<span class="t" style="top:178px;font-size:20px;line-height:26px;color:#2e2e2e;left:194.90px;">C</span>
<div class="r" style="left:226.50px;top:180.00px;width:1.00px;height:22.00px;background:#c8c8c8;"></div>
<div class="r" style="left:227.00px;top:178.50px;width:296.50px;height:23.50px;background:#cdcdcd;"></div>
<div class="r" style="left:227.00px;top:200.50px;width:296.50px;height:2.00px;background:#217346;"></div>
<span class="t" style="top:178px;font-size:20px;line-height:26px;color:#1e7145;left:367.69px;">D</span>
<div class="r" style="left:523.00px;top:180.00px;width:1.00px;height:22.00px;background:#c8c8c8;"></div>
<span class="t" style="top:178px;font-size:20px;line-height:26px;color:#2e2e2e;left:799.19px;">E</span>
<div class="r" style="left:1088.50px;top:180.00px;width:1.00px;height:22.00px;background:#c8c8c8;"></div>
<span class="t" style="top:178px;font-size:20px;line-height:26px;color:#2e2e2e;left:1266.47px;">F</span>
<div class="r" style="left:1456.50px;top:180.00px;width:1.00px;height:22.00px;background:#c8c8c8;"></div>
<span class="t" style="top:178px;font-size:20px;line-height:26px;color:#2e2e2e;left:1506.72px;">G</span>
<div class="r" style="left:1571.00px;top:180.00px;width:1.00px;height:22.00px;background:#c8c8c8;"></div>
<span class="t" style="top:178px;font-size:20px;line-height:26px;color:#2e2e2e;left:1622.02px;">H</span>
<div class="r" style="left:1686.50px;top:180.00px;width:1.00px;height:22.00px;background:#c8c8c8;"></div>
<span class="t" style="top:178px;font-size:20px;line-height:26px;color:#2e2e2e;left:1736.22px;">I</span>
<div class="r" style="left:1790.50px;top:180.00px;width:1.00px;height:22.00px;background:#c8c8c8;"></div>
<span class="t" style="top:178px;font-size:20px;line-height:26px;color:#2e2e2e;left:1796.62px;">K</span>
<div class="r" style="left:1816.50px;top:180.00px;width:1.00px;height:22.00px;background:#c8c8c8;"></div>
<span class="t" style="top:178px;font-size:20px;line-height:26px;color:#2e2e2e;left:1832.45px;">L</span>
<div class="r" style="left:1859.50px;top:180.00px;width:1.00px;height:22.00px;background:#c8c8c8;"></div>
<div class="r" style="left:40.00px;top:180.00px;width:1.00px;height:22.00px;background:#c8c8c8;"></div>
<div class="r" style="left:0.00px;top:203.00px;width:40.50px;height:786.00px;background:#e9e9e9;"></div>
<div class="r" style="left:40.20px;top:203.00px;width:1.00px;height:786.00px;background:#b9b9b9;"></div>
<span class="t" style="top:205px;font-size:20px;line-height:26px;color:#2e2e2e;left:14.46px;">1</span>
<div class="r" style="left:3.00px;top:233.00px;width:37.00px;height:1.00px;background:#c8c8c8;"></div>
<span class="t" style="top:234px;font-size:20px;line-height:26px;color:#2e2e2e;left:14.74px;">2</span>
<div class="r" style="left:3.00px;top:260.50px;width:37.00px;height:1.00px;background:#c8c8c8;"></div>
<span class="t" style="top:262px;font-size:20px;line-height:26px;color:#2e2e2e;left:14.80px;">3</span>
<div class="r" style="left:3.00px;top:288.50px;width:37.00px;height:1.00px;background:#c8c8c8;"></div>
<span class="t" style="top:290px;font-size:20px;line-height:26px;color:#2e2e2e;left:14.80px;">4</span>
<div class="r" style="left:3.00px;top:316.50px;width:37.00px;height:1.00px;background:#c8c8c8;"></div>
<span class="t" style="top:310px;font-size:20px;line-height:26px;color:#2e2e2e;left:14.76px;">5</span>
<div class="r" style="left:3.00px;top:338.50px;width:37.00px;height:1.00px;background:#c8c8c8;"></div>
<span class="t" style="top:358px;font-size:20px;line-height:26px;color:#2e2e2e;left:14.67px;">6</span>
<div class="r" style="left:3.00px;top:384.00px;width:37.00px;height:1.00px;background:#c8c8c8;"></div>
<span class="t" style="top:441px;font-size:20px;line-height:26px;color:#2e2e2e;left:14.73px;">7</span>
<div class="r" style="left:3.00px;top:467.50px;width:37.00px;height:1.00px;background:#c8c8c8;"></div>
<span class="t" style="top:469px;font-size:20px;line-height:26px;color:#2e2e2e;left:14.74px;">8</span>
<div class="r" style="left:3.00px;top:495.50px;width:37.00px;height:1.00px;background:#c8c8c8;"></div>
<span class="t" style="top:497px;font-size:20px;line-height:26px;color:#2e2e2e;left:14.74px;">9</span>
<div class="r" style="left:3.00px;top:523.50px;width:37.00px;height:1.00px;background:#c8c8c8;"></div>
<span class="t" style="top:525px;font-size:20px;line-height:26px;color:#2e2e2e;left:8.81px;">10</span>
<div class="r" style="left:3.00px;top:551.50px;width:37.00px;height:1.00px;background:#c8c8c8;"></div>
<span class="t" style="top:553px;font-size:20px;line-height:26px;color:#2e2e2e;left:9.65px;">11</span>
<div class="r" style="left:3.00px;top:579.50px;width:37.00px;height:1.00px;background:#c8c8c8;"></div>
<div class="r" style="left:0.00px;top:580.50px;width:39.00px;height:27.50px;background:#d2d2d2;"></div>
<div class="r" style="left:38.50px;top:580.00px;width:2.50px;height:28.50px;background:#217346;"></div>
<span class="t" style="top:581px;font-size:20px;line-height:26px;color:#1e7145;font-weight:700;left:8.95px;">12</span>
<div class="r" style="left:3.00px;top:607.50px;width:37.00px;height:1.00px;background:#c8c8c8;"></div>
<span class="t" style="top:609px;font-size:20px;line-height:26px;color:#2e2e2e;left:8.85px;">13</span>
<div class="r" style="left:3.00px;top:635.50px;width:37.00px;height:1.00px;background:#c8c8c8;"></div>
<span class="t" style="top:637px;font-size:20px;line-height:26px;color:#2e2e2e;left:8.71px;">14</span>
<div class="r" style="left:3.00px;top:663.50px;width:37.00px;height:1.00px;background:#c8c8c8;"></div>
<span class="t" style="top:665px;font-size:20px;line-height:26px;color:#2e2e2e;left:8.83px;">15</span>
<div class="r" style="left:3.00px;top:691.50px;width:37.00px;height:1.00px;background:#c8c8c8;"></div>
<span class="t" style="top:693px;font-size:20px;line-height:26px;color:#2e2e2e;left:8.85px;">16</span>
<div class="r" style="left:3.00px;top:719.50px;width:37.00px;height:1.00px;background:#c8c8c8;"></div>
<span class="t" style="top:721px;font-size:20px;line-height:26px;color:#2e2e2e;left:8.92px;">17</span>
<div class="r" style="left:3.00px;top:747.50px;width:37.00px;height:1.00px;background:#c8c8c8;"></div>
<span class="t" style="top:749px;font-size:20px;line-height:26px;color:#2e2e2e;left:8.85px;">18</span>
<div class="r" style="left:3.00px;top:775.50px;width:37.00px;height:1.00px;background:#c8c8c8;"></div>
<span class="t" style="top:777px;font-size:20px;line-height:26px;color:#2e2e2e;left:8.89px;">19</span>
<div class="r" style="left:3.00px;top:803.50px;width:37.00px;height:1.00px;background:#c8c8c8;"></div>
<span class="t" style="top:805px;font-size:20px;line-height:26px;color:#2e2e2e;left:9.06px;">20</span>
<div class="r" style="left:3.00px;top:831.50px;width:37.00px;height:1.00px;background:#c8c8c8;"></div>
<span class="t" style="top:833px;font-size:20px;line-height:26px;color:#2e2e2e;left:9.16px;">21</span>
<div class="r" style="left:3.00px;top:859.50px;width:37.00px;height:1.00px;background:#c8c8c8;"></div>
<span class="t" style="top:861px;font-size:20px;line-height:26px;color:#2e2e2e;left:9.18px;">22</span>
<div class="r" style="left:3.00px;top:887.50px;width:37.00px;height:1.00px;background:#c8c8c8;"></div>
<span class="t" style="top:889px;font-size:20px;line-height:26px;color:#2e2e2e;left:9.11px;">23</span>
<div class="r" style="left:3.00px;top:915.50px;width:37.00px;height:1.00px;background:#c8c8c8;"></div>
<span class="t" style="top:917px;font-size:20px;line-height:26px;color:#2e2e2e;left:8.97px;">24</span>
<div class="r" style="left:3.00px;top:943.50px;width:37.00px;height:1.00px;background:#c8c8c8;"></div>
<span class="t" style="top:945px;font-size:20px;line-height:26px;color:#2e2e2e;left:9.09px;">25</span>
<div class="r" style="left:3.00px;top:971.50px;width:37.00px;height:1.00px;background:#c8c8c8;"></div>
<span class="t" style="top:973px;font-size:20px;line-height:26px;color:#2e2e2e;left:9.11px;">26</span>
<div class="r" style="left:3.00px;top:999.50px;width:37.00px;height:1.00px;background:#c8c8c8;"></div>
<div class="r" style="left:3.00px;top:313.50px;width:36.00px;height:3.00px;background:#e9e9e9;"></div>
<div class="r" style="left:3.00px;top:316.50px;width:37.00px;height:1.00px;background:#c8c8c8;"></div>
<div class="r" style="left:41.00px;top:467.80px;width:1776.00px;height:27.90px;background:#d3d3d3;"></div>
<div class="r" style="left:41.00px;top:523.80px;width:1776.00px;height:27.90px;background:#d3d3d3;"></div>
<div class="r" style="left:41.00px;top:579.80px;width:1776.00px;height:27.90px;background:#d3d3d3;"></div>
<div class="r" style="left:41.00px;top:635.80px;width:1776.00px;height:27.90px;background:#d3d3d3;"></div>
<div class="r" style="left:41.00px;top:691.80px;width:1776.00px;height:27.90px;background:#d3d3d3;"></div>
<div class="r" style="left:41.00px;top:747.80px;width:1776.00px;height:27.90px;background:#d3d3d3;"></div>
<div class="r" style="left:41.00px;top:803.80px;width:1776.00px;height:27.90px;background:#d3d3d3;"></div>
<div class="r" style="left:41.00px;top:859.80px;width:1776.00px;height:27.90px;background:#d3d3d3;"></div>
<div class="r" style="left:41.00px;top:915.80px;width:1776.00px;height:27.90px;background:#d3d3d3;"></div>
<div class="r" style="left:41.00px;top:971.80px;width:1776.00px;height:16.90px;background:#d3d3d3;"></div>
<div class="r" style="left:1817.50px;top:203.00px;width:43.00px;height:786.00px;background:#eeeeee;"></div>
<div class="r" style="left:1860.00px;top:203.00px;width:41.00px;height:786.00px;background:#eeeeee;"></div>
<div class="r" style="left:1816.80px;top:384.00px;width:1.20px;height:605.00px;background:#c3df7e;"></div>
<div class="r" style="left:1860.00px;top:202.50px;width:40.50px;height:58.50px;background:#94d010;"></div>
<div class="r" style="left:1860.00px;top:261.00px;width:42.00px;height:78.00px;border:2px dashed #c5d566;border-top:none;border-right:none;"></div>
<span class="t" style="top:292px;font-size:18px;line-height:24px;color:#111;font-weight:700;left:1895.98px;transform:scaleX(0.9898);transform-origin:0 50%;">a</span>
<svg class="r" style="left:1844.00px;top:362.00px" width="58" height="215" viewBox="0 0 58 215"><path d="M40.5 2.5H57.5V212.5H40.5V88L3.5 56L40.5 38Z" fill="#e7e5dd" stroke="#bcbab4" stroke-width="1.5"/></svg>
<div class="r" style="left:1900.20px;top:203.00px;width:1.30px;height:786.00px;background:#bdbdbd;"></div>
<div class="r" style="left:1901.50px;top:178.00px;width:18.50px;height:811.00px;background:#eeeeee;"></div>
<div class="r" style="left:1903.00px;top:196.00px;width:17.00px;height:776.00px;background:#d1d1d1;"></div>
<div class="r" style="left:1903.00px;top:179.50px;width:15.50px;height:16.00px;background:#f6f6f6;border:1px solid #c8c8c8;"></div>
<svg class="r" style="left:1906.50px;top:184.50px" width="9" height="6" viewBox="0 0 9 6"><path d="M0.5 5.5L4.5 0.8L8.5 5.5Z" fill="#666"/></svg>
<div class="r" style="left:1903.00px;top:195.50px;width:15.50px;height:207.50px;background:#efefef;border:1px solid #c2c2c2;"></div>
<div class="r" style="left:1903.00px;top:972.50px;width:15.50px;height:16.00px;background:#f6f6f6;border:1px solid #c8c8c8;"></div>
<svg class="r" style="left:1906.50px;top:978.00px" width="9" height="6" viewBox="0 0 9 6"><path d="M0.5 0.5L4.5 5.2L8.5 0.5Z" fill="#555"/></svg>
<span class="t" style="top:206px;font-size:19.8px;line-height:26px;color:#94d010;font-weight:700;left:504.67px;transform:scaleX(1.0795);transform-origin:0 50%;">© Copyright by MeineVorlagen – www.MeineVorlagen.com - Alle Rechte vorbehalten</span>
<span class="t" style="top:273px;font-size:34.5px;line-height:42px;color:#0a0a0a;font-weight:700;left:46.59px;transform:scaleX(1.0442);transform-origin:0 50%;">Projekt: Musterprojekt</span>
<span class="t" style="top:265px;font-size:17.1px;line-height:23px;color:#94d010;left:1395.13px;transform:scaleX(1.1200);transform-origin:0 50%;">Status:</span>
<span class="t" style="top:265px;font-size:17.1px;line-height:23px;color:#111;font-weight:700;left:1457.90px;transform:scaleX(0.9943);transform-origin:0 50%;">standby</span>
<span class="t" style="top:265px;font-size:17.1px;line-height:23px;color:#94d010;left:1529.00px;transform:scaleX(1.3172);transform-origin:0 50%;">-</span>
<span class="t" style="top:265px;font-size:17.1px;line-height:23px;color:#111;font-weight:700;left:1541.81px;transform:scaleX(1.1430);transform-origin:0 50%;">|</span>
<span class="t" style="top:265px;font-size:17.1px;line-height:23px;color:#111;font-weight:700;left:1554.09px;transform:scaleX(1.0107);transform-origin:0 50%;">ausstehend</span>
<span class="t" style="top:265px;font-size:17.1px;line-height:23px;color:#94d010;left:1654.01px;transform:scaleX(1.0283);transform-origin:0 50%;">0%</span>
<span class="t" style="top:265px;font-size:17.1px;line-height:23px;color:#111;font-weight:700;left:1686.71px;transform:scaleX(1.1430);transform-origin:0 50%;">|</span>
<span class="t" style="top:265px;font-size:17.1px;line-height:23px;color:#111;font-weight:700;left:1698.30px;transform:scaleX(1.0429);transform-origin:0 50%;">erledigt</span>
<span class="t" style="top:265px;font-size:17.1px;line-height:23px;color:#94d010;left:1767.65px;transform:scaleX(1.0377);transform-origin:0 50%;">100%</span>
<span class="t" style="top:293px;font-size:17.1px;line-height:23px;color:#94d010;left:1395.96px;transform:scaleX(1.1876);transform-origin:0 50%;">Art:</span>
<span class="t" style="top:293px;font-size:17.1px;line-height:23px;color:#111;font-weight:700;left:1436.58px;transform:scaleX(0.9942);transform-origin:0 50%;">Aufgabe</span>
<span class="t" style="top:293px;font-size:17.1px;line-height:23px;color:#94d010;left:1509.61px;transform:scaleX(1.1221);transform-origin:0 50%;">(A)</span>
<span class="t" style="top:293px;font-size:17.1px;line-height:23px;color:#111;font-weight:700;left:1542.01px;transform:scaleX(1.1430);transform-origin:0 50%;">|</span>
<span class="t" style="top:293px;font-size:17.1px;line-height:23px;color:#111;font-weight:700;left:1553.79px;transform:scaleX(1.0551);transform-origin:0 50%;">Information</span>
<span class="t" style="top:293px;font-size:17.1px;line-height:23px;color:#94d010;left:1657.16px;transform:scaleX(1.1698);transform-origin:0 50%;">(I)</span>
<span class="t" style="top:293px;font-size:17.1px;line-height:23px;color:#111;font-weight:700;left:1682.81px;transform:scaleX(1.1430);transform-origin:0 50%;">|</span>
<span class="t" style="top:293px;font-size:17.1px;line-height:23px;color:#111;font-weight:700;left:1694.93px;transform:scaleX(0.9386);transform-origin:0 50%;">Beschlüsse</span>
<span class="t" style="top:293px;font-size:17.1px;line-height:23px;color:#94d010;left:1789.48px;transform:scaleX(1.0544);transform-origin:0 50%;">(B)</span>
<div class="r" style="left:41.00px;top:338.80px;width:1776.50px;height:45.20px;background:#94d010;"></div>
<div class="r" style="left:41.00px;top:384.00px;width:1776.50px;height:2.50px;background:linear-gradient(180deg,#dff0b0,#f3f6ea);"></div>
<span class="t" style="top:342px;font-size:18.0px;line-height:24px;color:#f4fbe0;font-weight:700;left:43.68px;transform:scaleX(1.0988);transform-origin:0 50%;">Nr.</span>
<span class="t" style="top:342px;font-size:18.0px;line-height:24px;color:#f4fbe0;font-weight:700;left:76.77px;transform:scaleX(1.0245);transform-origin:0 50%;">Datum</span>
<span class="t" style="top:367px;font-size:12.6px;line-height:18px;color:#e4f3b6;left:77.17px;transform:scaleX(1.0657);transform-origin:0 50%;">(Erstellt am)</span>
<span class="t" style="top:342px;font-size:18.0px;line-height:24px;color:#f4fbe0;font-weight:700;left:189.55px;transform:scaleX(1.0067);transform-origin:0 50%;">Art</span>
<span class="t" style="top:342px;font-size:18.0px;line-height:24px;color:#f4fbe0;font-weight:700;left:231.80px;transform:scaleX(0.9896);transform-origin:0 50%;">Thema / Stichwort</span>
<span class="t" style="top:342px;font-size:18.0px;line-height:24px;color:#f4fbe0;font-weight:700;left:526.56px;transform:scaleX(0.9831);transform-origin:0 50%;">Aufgaben / Beschlüsse / Probleme / Hinweise</span>
<span class="t" style="top:342px;font-size:18.0px;line-height:24px;color:#f4fbe0;font-weight:700;left:1092.53px;transform:scaleX(0.9680);transform-origin:0 50%;">Bemerkungen / Lösung</span>
<span class="t" style="top:342px;font-size:18.0px;line-height:24px;color:#f4fbe0;font-weight:700;left:1460.98px;transform:scaleX(1.0482);transform-origin:0 50%;">Wer</span>
<span class="t" style="top:342px;font-size:18.0px;line-height:24px;color:#f4fbe0;font-weight:700;left:1573.82px;transform:scaleX(0.9808);transform-origin:0 50%;">Bis Wann</span>
<span class="t" style="top:342px;font-size:18.0px;line-height:24px;color:#f4fbe0;font-weight:700;left:1689.49px;transform:scaleX(0.9766);transform-origin:0 50%;">Status</span>
<div class="r" style="left:58.00px;top:367.50px;width:15.50px;height:15.50px;background:#e3e3e3;border:1px solid #c9c9c9;"></div>
<svg class="r" style="left:62.30px;top:373.25px" width="7.0" height="4.5" viewBox="0 0 7.0 4.5"><path d="M1 1 L6.0 1 L3.5 3.5 Z" fill="#555"/></svg>
<div class="r" style="left:161.00px;top:367.50px;width:15.50px;height:15.50px;background:#e3e3e3;border:1px solid #c9c9c9;"></div>
<svg class="r" style="left:165.30px;top:373.25px" width="7.0" height="4.5" viewBox="0 0 7.0 4.5"><path d="M1 1 L6.0 1 L3.5 3.5 Z" fill="#555"/></svg>
<div class="r" style="left:211.50px;top:367.50px;width:15.50px;height:15.50px;background:#e3e3e3;border:1px solid #c9c9c9;"></div>
<svg class="r" style="left:215.80px;top:373.25px" width="7.0" height="4.5" viewBox="0 0 7.0 4.5"><path d="M1 1 L6.0 1 L3.5 3.5 Z" fill="#555"/></svg>
<div class="r" style="left:506.50px;top:367.50px;width:15.50px;height:15.50px;background:#e3e3e3;border:1px solid #c9c9c9;"></div>
<svg class="r" style="left:510.80px;top:373.25px" width="7.0" height="4.5" viewBox="0 0 7.0 4.5"><path d="M1 1 L6.0 1 L3.5 3.5 Z" fill="#555"/></svg>
<div class="r" style="left:1073.00px;top:367.50px;width:15.50px;height:15.50px;background:#e3e3e3;border:1px solid #c9c9c9;"></div>
<svg class="r" style="left:1077.30px;top:373.25px" width="7.0" height="4.5" viewBox="0 0 7.0 4.5"><path d="M1 1 L6.0 1 L3.5 3.5 Z" fill="#555"/></svg>
<div class="r" style="left:1440.50px;top:367.50px;width:15.50px;height:15.50px;background:#e3e3e3;border:1px solid #c9c9c9;"></div>
<svg class="r" style="left:1444.80px;top:373.25px" width="7.0" height="4.5" viewBox="0 0 7.0 4.5"><path d="M1 1 L6.0 1 L3.5 3.5 Z" fill="#555"/></svg>
<div class="r" style="left:1555.00px;top:367.50px;width:15.50px;height:15.50px;background:#e3e3e3;border:1px solid #c9c9c9;"></div>
<svg class="r" style="left:1559.30px;top:373.25px" width="7.0" height="4.5" viewBox="0 0 7.0 4.5"><path d="M1 1 L6.0 1 L3.5 3.5 Z" fill="#555"/></svg>
<div class="r" style="left:1670.00px;top:367.50px;width:15.50px;height:15.50px;background:#e3e3e3;border:1px solid #c9c9c9;"></div>
<svg class="r" style="left:1674.30px;top:373.25px" width="7.0" height="4.5" viewBox="0 0 7.0 4.5"><path d="M1 1 L6.0 1 L3.5 3.5 Z" fill="#555"/></svg>
<div class="r" style="left:1775.00px;top:367.50px;width:15.50px;height:15.50px;background:#e3e3e3;border:1px solid #c9c9c9;"></div>
<svg class="r" style="left:1779.30px;top:373.25px" width="7.0" height="4.5" viewBox="0 0 7.0 4.5"><path d="M1 1 L6.0 1 L3.5 3.5 Z" fill="#555"/></svg>
<div class="r" style="left:1800.50px;top:367.50px;width:15.50px;height:15.50px;background:#e3e3e3;border:1px solid #c9c9c9;"></div>
<svg class="r" style="left:1804.80px;top:373.25px" width="7.0" height="4.5" viewBox="0 0 7.0 4.5"><path d="M1 1 L6.0 1 L3.5 3.5 Z" fill="#555"/></svg>
<div class="r" style="left:226.50px;top:579.00px;width:298.00px;height:29.00px;background:#d6d3d1;border:2px solid #3f8a63;"></div>
<div class="r" style="left:1688.00px;top:386.00px;width:52.50px;height:81.00px;background:linear-gradient(90deg,#96d010 0%,#a4d52f 25%,#c6e27e 60%,#e9efd6 92%,rgba(237,237,237,0) 100%);"></div>
<span class="t" style="top:387px;font-size:17.2px;line-height:24px;color:#111;font-weight:700;left:51.78px;transform:scaleX(1.1244);transform-origin:0 50%;">1</span>
<span class="t" style="top:387px;font-size:17.2px;line-height:24px;color:#111;left:77.28px;transform:scaleX(1.0790);transform-origin:0 50%;">03.04.13</span>
<span class="t" style="top:387px;font-size:17.2px;line-height:24px;color:#94d010;left:189.31px;transform:scaleX(1.1156);transform-origin:0 50%;">(A)</span>
<span class="t" style="top:387px;font-size:17.2px;line-height:24px;color:#111;left:231.60px;transform:scaleX(1.0307);transform-origin:0 50%;">Thema 1</span>
<span class="t" style="top:387px;font-size:17.2px;line-height:24px;color:#111;left:1488.06px;transform:scaleX(1.0219);transform-origin:0 50%;">Pers.1</span>
<span class="t" style="top:387px;font-size:17.2px;line-height:24px;color:#111;left:1592.06px;transform:scaleX(1.0822);transform-origin:0 50%;">28.05.13</span>
<span class="t" style="top:387px;font-size:17.2px;line-height:24px;color:#111;left:1689.99px;transform:scaleX(1.0325);transform-origin:0 50%;">50%</span>
<svg class="r" style="left:1792.80px;top:388.00px" width="20" height="20" viewBox="0 0 20 20"><circle cx="10" cy="10" r="9.2" fill="#f6dede"/><circle cx="10" cy="10" r="8" fill="#d9534f"/><circle cx="10" cy="8" r="6.5" fill="#e5726e" opacity="0.55"/><path d="M6.3 6.3L13.7 13.7M13.7 6.3L6.3 13.7" stroke="#f8d6d6" stroke-width="2" stroke-linecap="round"/></svg>
<div class="r" style="left:1688.00px;top:469.50px;width:102.00px;height:25.50px;background:linear-gradient(90deg,#96d010 0%,#a4d52f 25%,#c6e27e 60%,#e9efd6 92%,rgba(237,237,237,0) 100%);"></div>
<span class="t" style="top:471px;font-size:17.2px;line-height:24px;color:#111;font-weight:700;left:52.35px;transform:scaleX(1.0868);transform-origin:0 50%;">2</span>
<span class="t" style="top:471px;font-size:17.2px;line-height:24px;color:#111;left:77.28px;transform:scaleX(1.0790);transform-origin:0 50%;">03.04.13</span>
<span class="t" style="top:471px;font-size:17.2px;line-height:24px;color:#94d010;font-weight:700;left:189.60px;transform:scaleX(1.0467);transform-origin:0 50%;">(B)</span>
<span class="t" style="top:471px;font-size:17.2px;line-height:24px;color:#8a8a8a;font-style:italic;left:230.37px;transform:scaleX(1.0517);transform-origin:0 50%;">Thema 2</span>
<span class="t" style="top:471px;font-size:17.2px;line-height:24px;color:#8a8a8a;font-style:italic;left:1486.96px;transform:scaleX(1.0116);transform-origin:0 50%;">Pers.2</span>
<span class="t" style="top:471px;font-size:17.2px;line-height:24px;color:#8a8a8a;font-style:italic;left:1590.70px;transform:scaleX(1.0749);transform-origin:0 50%;">01.04.13</span>
<span class="t" style="top:471px;font-size:17.2px;line-height:24px;color:#7c9a4a;font-style:italic;left:1690.03px;transform:scaleX(1.0512);transform-origin:0 50%;">100%</span>
<svg class="r" style="left:1792.80px;top:471.00px" width="20" height="20" viewBox="0 0 20 20"><circle cx="10" cy="10" r="9.2" fill="#d3ead8"/><circle cx="10" cy="10" r="8" fill="#3a9a55"/><circle cx="10" cy="8" r="6.5" fill="#5fb777" opacity="0.5"/><path d="M5.8 10.5L8.8 13.3L14.2 6.8" fill="none" stroke="#f1faf3" stroke-width="2.2" stroke-linecap="round" stroke-linejoin="round"/></svg>
<span class="t" style="top:499px;font-size:17.2px;line-height:24px;color:#111;font-weight:700;left:52.58px;transform:scaleX(1.0526);transform-origin:0 50%;">3</span>
<span class="t" style="top:499px;font-size:17.2px;line-height:24px;color:#111;left:77.28px;transform:scaleX(1.0790);transform-origin:0 50%;">03.04.13</span>
<span class="t" style="top:499px;font-size:17.2px;line-height:24px;color:#94d010;left:189.31px;transform:scaleX(1.1156);transform-origin:0 50%;">(A)</span>
<span class="t" style="top:499px;font-size:17.2px;line-height:24px;color:#111;left:231.60px;transform:scaleX(1.0294);transform-origin:0 50%;">Thema 3</span>
<span class="t" style="top:499px;font-size:17.2px;line-height:24px;color:#111;left:1488.06px;transform:scaleX(1.0219);transform-origin:0 50%;">Pers.1</span>
<span class="t" style="top:499px;font-size:17.2px;line-height:24px;color:#111;left:1591.57px;transform:scaleX(1.0896);transform-origin:0 50%;">10.04.13</span>
<span class="t" style="top:499px;font-size:17.2px;line-height:24px;color:#111;left:1690.00px;transform:scaleX(1.0393);transform-origin:0 50%;">0%</span>
<svg class="r" style="left:1792.80px;top:499.50px" width="20" height="20" viewBox="0 0 20 20"><circle cx="10" cy="10" r="9.2" fill="#f6dede"/><circle cx="10" cy="10" r="8" fill="#d9534f"/><circle cx="10" cy="8" r="6.5" fill="#e5726e" opacity="0.55"/><path d="M6.3 6.3L13.7 13.7M13.7 6.3L6.3 13.7" stroke="#f8d6d6" stroke-width="2" stroke-linecap="round"/></svg>
<div class="r" style="left:1688.00px;top:525.50px;width:6.00px;height:25.50px;background:linear-gradient(90deg,#96d010 0%,#a4d52f 25%,#c6e27e 60%,#e9efd6 92%,rgba(237,237,237,0) 100%);"></div>
<span class="t" style="top:527px;font-size:17.2px;line-height:24px;color:#111;font-weight:700;left:52.75px;transform:scaleX(0.9768);transform-origin:0 50%;">4</span>
<span class="t" style="top:527px;font-size:17.2px;line-height:24px;color:#111;left:77.28px;transform:scaleX(1.0790);transform-origin:0 50%;">03.04.13</span>
<span class="t" style="top:527px;font-size:17.2px;line-height:24px;color:#94d010;left:189.31px;transform:scaleX(1.1156);transform-origin:0 50%;">(A)</span>
<span class="t" style="top:527px;font-size:17.2px;line-height:24px;color:#111;left:231.60px;transform:scaleX(1.0311);transform-origin:0 50%;">Thema 2</span>
<span class="t" style="top:527px;font-size:17.2px;line-height:24px;color:#111;left:1488.06px;transform:scaleX(1.0219);transform-origin:0 50%;">Pers.1</span>
<span class="t" style="top:527px;font-size:17.2px;line-height:24px;color:#111;left:1591.57px;transform:scaleX(1.0896);transform-origin:0 50%;">10.04.13</span>
<span class="t" style="top:527px;font-size:17.2px;line-height:24px;color:#111;left:1689.32px;transform:scaleX(1.0522);transform-origin:0 50%;">10%</span>
<svg class="r" style="left:1792.80px;top:527.50px" width="20" height="20" viewBox="0 0 20 20"><circle cx="10" cy="10" r="9.2" fill="#f6dede"/><circle cx="10" cy="10" r="8" fill="#d9534f"/><circle cx="10" cy="8" r="6.5" fill="#e5726e" opacity="0.55"/><path d="M6.3 6.3L13.7 13.7M13.7 6.3L6.3 13.7" stroke="#f8d6d6" stroke-width="2" stroke-linecap="round"/></svg>
<div class="r" style="left:1688.00px;top:553.50px;width:15.00px;height:25.50px;background:linear-gradient(90deg,#96d010 0%,#a4d52f 25%,#c6e27e 60%,#e9efd6 92%,rgba(237,237,237,0) 100%);"></div>
<span class="t" style="top:555px;font-size:17.2px;line-height:24px;color:#111;font-weight:700;left:52.44px;transform:scaleX(1.0516);transform-origin:0 50%;">5</span>
<span class="t" style="top:555px;font-size:17.2px;line-height:24px;color:#111;left:77.28px;transform:scaleX(1.0790);transform-origin:0 50%;">03.04.13</span>
<span class="t" style="top:555px;font-size:17.2px;line-height:24px;color:#94d010;left:189.31px;transform:scaleX(1.1156);transform-origin:0 50%;">(A)</span>
<span class="t" style="top:555px;font-size:17.2px;line-height:24px;color:#111;left:231.60px;transform:scaleX(1.0294);transform-origin:0 50%;">Thema 3</span>
<span class="t" style="top:555px;font-size:17.2px;line-height:24px;color:#111;left:1488.06px;transform:scaleX(1.0219);transform-origin:0 50%;">Pers.1</span>
<span class="t" style="top:555px;font-size:17.2px;line-height:24px;color:#111;left:1591.57px;transform:scaleX(1.0896);transform-origin:0 50%;">10.04.13</span>
<span class="t" style="top:555px;font-size:17.2px;line-height:24px;color:#111;left:1689.80px;transform:scaleX(1.0380);transform-origin:0 50%;">20%</span>
<svg class="r" style="left:1792.80px;top:555.50px" width="20" height="20" viewBox="0 0 20 20"><circle cx="10" cy="10" r="9.2" fill="#f6dede"/><circle cx="10" cy="10" r="8" fill="#d9534f"/><circle cx="10" cy="8" r="6.5" fill="#e5726e" opacity="0.55"/><path d="M6.3 6.3L13.7 13.7M13.7 6.3L6.3 13.7" stroke="#f8d6d6" stroke-width="2" stroke-linecap="round"/></svg>
<div class="r" style="left:1688.00px;top:581.50px;width:42.00px;height:25.50px;background:linear-gradient(90deg,#96d010 0%,#a4d52f 25%,#c6e27e 60%,#e9efd6 92%,rgba(237,237,237,0) 100%);"></div>
<span class="t" style="top:583px;font-size:17.2px;line-height:24px;color:#111;font-weight:700;left:52.32px;transform:scaleX(1.0824);transform-origin:0 50%;">6</span>
<span class="t" style="top:583px;font-size:17.2px;line-height:24px;color:#111;left:77.28px;transform:scaleX(1.0790);transform-origin:0 50%;">03.04.13</span>
<span class="t" style="top:583px;font-size:17.2px;line-height:24px;color:#94d010;left:189.31px;transform:scaleX(1.1156);transform-origin:0 50%;">(A)</span>
<span class="t" style="top:583px;font-size:17.2px;line-height:24px;color:#111;left:231.60px;transform:scaleX(1.0294);transform-origin:0 50%;">Thema 3</span>
<span class="t" style="top:583px;font-size:17.2px;line-height:24px;color:#111;left:1488.06px;transform:scaleX(1.0219);transform-origin:0 50%;">Pers.1</span>
<span class="t" style="top:583px;font-size:17.2px;line-height:24px;color:#111;left:1591.57px;transform:scaleX(1.0896);transform-origin:0 50%;">10.04.13</span>
<span class="t" style="top:583px;font-size:17.2px;line-height:24px;color:#111;left:1690.30px;transform:scaleX(1.0234);transform-origin:0 50%;">40%</span>
<svg class="r" style="left:1792.80px;top:583.50px" width="20" height="20" viewBox="0 0 20 20"><circle cx="10" cy="10" r="9.2" fill="#f6dede"/><circle cx="10" cy="10" r="8" fill="#d9534f"/><circle cx="10" cy="8" r="6.5" fill="#e5726e" opacity="0.55"/><path d="M6.3 6.3L13.7 13.7M13.7 6.3L6.3 13.7" stroke="#f8d6d6" stroke-width="2" stroke-linecap="round"/></svg>
<span class="t" style="top:387px;font-size:17.2px;line-height:24px;color:#111;left:526.96px;transform:scaleX(1.0548);transform-origin:0 50%;">Aufgabe 1:  Beschreibung  was gemacht werden muss</span>
<span class="t" style="top:387px;font-size:17.2px;line-height:24px;color:#111;left:1092.97px;transform:scaleX(1.0811);transform-origin:0 50%;">Hier können weitere Bemerkungen notiert</span>
<span class="t" style="top:415px;font-size:17.2px;line-height:24px;color:#111;left:1093.73px;transform:scaleX(1.0516);transform-origin:0 50%;">werden. Oder auch eine Lösung zur</span>
<span class="t" style="top:444px;font-size:17.2px;line-height:24px;color:#111;left:1093.66px;transform:scaleX(1.0527);transform-origin:0 50%;">Aufgabe.</span>
<span class="t" style="top:471px;font-size:17.2px;line-height:24px;color:#8a8a8a;font-style:italic;left:526.50px;transform:scaleX(0.9462);transform-origin:0 50%;">Beschluss 1 ………</span>
<div class="r" style="left:525.00px;top:590.50px;width:15.50px;height:16.50px;background:#f0f0f0;border:1px solid #bcbcbc;"></div>
<svg class="r" style="left:529.80px;top:597.50px" width="6" height="4" viewBox="0 0 6 4"><path d="M1 1 L5 1 L3 3 Z" fill="#555"/></svg>
<div class="r" style="left:179.00px;top:607.00px;width:361.00px;height:168.00px;background:#efefef;border:1px solid #1c1c1c;"></div>
<div class="r" style="left:180.00px;top:608.00px;width:335.00px;height:19.80px;background:#3694ec;"></div>
<div class="r" style="left:515.00px;top:608.00px;width:24.00px;height:166.00px;background:#f0f0f0;"></div>
<div class="r" style="left:516.00px;top:639.50px;width:23.00px;height:18.00px;background:#c9c9c9;"></div>
<svg class="r" style="left:522.00px;top:617.00px" width="12" height="8" viewBox="0 0 12 8"><path d="M1 6.5L6 1.5L11 6.5" fill="none" stroke="#444" stroke-width="1.7"/></svg>
<svg class="r" style="left:522.00px;top:758.00px" width="12" height="8" viewBox="0 0 12 8"><path d="M1 1.5L6 6.5L11 1.5" fill="none" stroke="#444" stroke-width="1.7"/></svg>
<span class="t" style="top:609px;font-size:14px;line-height:20px;color:#dff0ff;left:185.06px;transform:scaleX(1.0714);transform-origin:0 50%;">Thema 3</span>
<span class="t" style="top:630px;font-size:14px;line-height:20px;color:#333;left:185.06px;transform:scaleX(1.0674);transform-origin:0 50%;">Thema 4</span>
<span class="t" style="top:650px;font-size:14px;line-height:20px;color:#333;left:185.06px;transform:scaleX(1.0709);transform-origin:0 50%;">Thema 5</span>
<span class="t" style="top:671px;font-size:14px;line-height:20px;color:#333;left:185.06px;transform:scaleX(1.0714);transform-origin:0 50%;">Thema 6</span>
<span class="t" style="top:692px;font-size:14px;line-height:20px;color:#333;left:185.06px;transform:scaleX(1.0732);transform-origin:0 50%;">Thema 7</span>
<div class="r" style="left:0.00px;top:989.00px;width:1920.00px;height:22.00px;background:#e9e9e9;"></div>
<div class="r" style="left:0.00px;top:988.50px;width:1901.00px;height:1.00px;background:#c4c4c4;"></div>
<svg class="r" style="left:21.00px;top:994.00px" width="6" height="10" viewBox="0 0 6 10"><path d="M5.5 0.5L0.5 5L5.5 9.5Z" fill="#cfcfcf"/></svg>
<svg class="r" style="left:45.00px;top:994.00px" width="6" height="10" viewBox="0 0 6 10"><path d="M0.5 0.5L5.5 5L0.5 9.5Z" fill="#bdbdbd"/></svg>
<div class="r" style="left:82.50px;top:992.00px;width:1.00px;height:14.00px;background:#c8c8c8;"></div>
<div class="r" style="left:84.00px;top:989.50px;width:86.00px;height:18.00px;background:#f2b085;"></div>
<span class="t" style="top:987px;font-size:13px;line-height:19px;color:#3b3b3b;left:93.35px;transform:scaleX(1.0824);transform-origin:0 50%;">Einführung</span>
<div class="r" style="left:173.50px;top:989.00px;width:89.00px;height:18.50px;background:linear-gradient(180deg,#f7f7f5 0%,#e6f3d8 60%,#d2eab9 100%);border-left:1px solid #c9c9c9;border-right:1px solid #c9c9c9;"></div>
<div class="r" style="left:173.50px;top:1006.50px;width:89.00px;height:2.00px;background:#4f9a3f;"></div>
<span class="t" style="top:987px;font-size:13px;line-height:19px;color:#2a7a3d;font-weight:700;left:183.15px;transform:scaleX(1.0433);transform-origin:0 50%;">ToDo-Liste</span>
<span class="t" style="top:987px;font-size:13px;line-height:19px;color:#555;left:272.17px;transform:scaleX(1.0566);transform-origin:0 50%;">Report</span>
<div class="r" style="left:325.50px;top:992.00px;width:1.00px;height:14.00px;background:#c8c8c8;"></div>
<span class="t" style="top:987px;font-size:13px;line-height:19px;color:#555;left:336.36px;transform:scaleX(1.0793);transform-origin:0 50%;">Stammdaten</span>
<div class="r" style="left:427.50px;top:992.00px;width:1.00px;height:14.00px;background:#c8c8c8;"></div>
<svg class="r" style="left:453.00px;top:990.50px" width="18" height="18" viewBox="0 0 18 18"><circle cx="9" cy="9" r="7.6" fill="none" stroke="#555" stroke-width="1.2"/><path d="M9 5V13M5 9H13" stroke="#555" stroke-width="1.5"/></svg>
<div class="r" style="left:1149.50px;top:994.50px;width:1.50px;height:1.50px;background:#888;"></div>
<div class="r" style="left:1149.50px;top:998.00px;width:1.50px;height:1.50px;background:#888;"></div>
<div class="r" style="left:1149.50px;top:1001.50px;width:1.50px;height:1.50px;background:#888;"></div>
<div class="r" style="left:1164.00px;top:992.50px;width:737.00px;height:14.50px;background:#d0d0d0;"></div>
<div class="r" style="left:1164.00px;top:992.50px;width:15.00px;height:14.50px;background:#f4f4f4;border:1px solid #c4c4c4;"></div>
<svg class="r" style="left:1168.50px;top:995.50px" width="6" height="9" viewBox="0 0 6 9"><path d="M5.5 0.5L0.5 4.5L5.5 8.5Z" fill="#555"/></svg>
<div class="r" style="left:1179.00px;top:992.50px;width:511.00px;height:14.50px;background:#f1f1f1;border:1px solid #c6c6c6;"></div>
<div class="r" style="left:1886.50px;top:992.50px;width:14.50px;height:14.50px;background:#f4f4f4;border:1px solid #c4c4c4;"></div>
<svg class="r" style="left:1891.00px;top:995.50px" width="6" height="9" viewBox="0 0 6 9"><path d="M0.5 0.5L5.5 4.5L0.5 8.5Z" fill="#555"/></svg>
<div class="r" style="left:0.00px;top:1011.00px;width:1920.00px;height:20.00px;background:#0f6435;"></div>
<div class="r" style="left:0.00px;top:1030.00px;width:1920.00px;height:1.00px;background:#a9d8c0;"></div>
<span class="t" style="top:1014px;font-size:10.5px;line-height:16px;color:#e8f2ea;left:5.59px;transform:scaleX(0.8256);transform-origin:0 50%;">BEREIT</span>
<svg class="r" style="left:54.00px;top:1015.00px" width="13" height="13" viewBox="0 0 13 13"><rect x="0.5" y="2.5" width="12" height="10" fill="none" stroke="#e6f0e8"/><path d="M0.5 5.5H12.5M0.5 8.5H12.5M4.5 5.5V12.5M8.5 5.5V12.5" stroke="#e6f0e8"/><rect x="0" y="0" width="6" height="4" fill="#e6f0e8"/></svg>
<div class="r" style="left:1649.00px;top:1011.00px;width:33.50px;height:20.00px;background:#0b4f28;"></div>
<svg class="r" style="left:1660.00px;top:1015.00px" width="12" height="12" viewBox="0 0 12 12"><rect x="0.5" y="0.5" width="11" height="11" fill="none" stroke="#fff"/><path d="M4.2 0.5V11.5M7.8 0.5V11.5M0.5 4.2H11.5M0.5 7.8H11.5" stroke="#fff"/></svg>
<svg class="r" style="left:1693.00px;top:1015.00px" width="12" height="12" viewBox="0 0 12 12"><rect x="0.5" y="0.5" width="11" height="11" fill="none" stroke="#dfeae2"/><rect x="3" y="3" width="6" height="6" fill="none" stroke="#dfeae2"/><path d="M4.5 5H7.5M4.5 7H7.5" stroke="#dfeae2" stroke-width="0.8"/></svg>
<svg class="r" style="left:1725.50px;top:1015.00px" width="13" height="12" viewBox="0 0 13 12"><rect x="0.5" y="0.5" width="12" height="11" fill="none" stroke="#f0f6f1"/><rect x="1" y="1" width="4" height="5.5" fill="#f0f6f1"/><rect x="7" y="1" width="5" height="5.5" fill="#f0f6f1"/></svg>
<div class="r" style="left:1752.50px;top:1020.00px;width:7.50px;height:2.00px;background:#f0f6f1;"></div>
<div class="r" style="left:1763.50px;top:1020.50px;width:99.00px;height:1.00px;background:#9cbfa8;"></div>
<div class="r" style="left:1812.50px;top:1018.00px;width:1.00px;height:6.00px;background:#9cbfa8;"></div>
<div class="r" style="left:1819.00px;top:1015.00px;width:5.00px;height:12.00px;background:#f4f8f5;"></div>
<div class="r" style="left:1866.50px;top:1020.00px;width:9.00px;height:2.00px;background:#f0f6f1;"></div>
<div class="r" style="left:1870.00px;top:1016.50px;width:2.00px;height:9.00px;background:#f0f6f1;"></div>
<span class="t" style="top:1013px;font-size:10.5px;line-height:16px;color:#e8f2ea;left:1887.94px;transform:scaleX(0.9462);transform-origin:0 50%;">150%</span>
</body></html>
